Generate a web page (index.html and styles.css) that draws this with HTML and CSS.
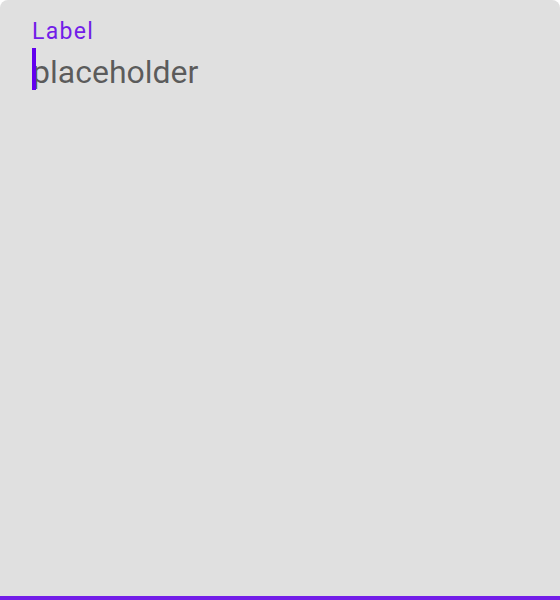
FILE: index.html
```html
<!DOCTYPE html>
<html>
<head>
<meta charset="utf-8">
<link rel="stylesheet" href="styles.css">
</head>
<body>
<div class="field">
  <div class="label">Label</div>
  <div class="input">
    <span class="caret"></span>
    <span class="placeholder">placeholder</span>
  </div>
</div>
</body>
</html>
```
FILE: styles.css
```css
html, body { margin: 0; padding: 0; background: #fff; }
.field {
  box-sizing: border-box;
  width: 560px;
  height: 600px;
  background: #e0e0e0;
  border-radius: 8px 8px 0 0;
  border-bottom: 4px solid #721de8;
  padding: 18px 32px 0 32px;
  font-family: Roboto, "Liberation Sans", sans-serif;
}
.label {
  color: #721de8;
  font-size: 23px;
  line-height: 28px;
  letter-spacing: 1.3px;
}
.input {
  position: relative;
  margin-top: 2px;
  height: 48px;
  font-size: 32px;
  line-height: 48px;
  color: rgba(0,0,0,0.6);
}
.caret {
  position: absolute;
  left: 0;
  top: 0;
  width: 4px;
  height: 42px;
  background: #6200ee;
}
```
